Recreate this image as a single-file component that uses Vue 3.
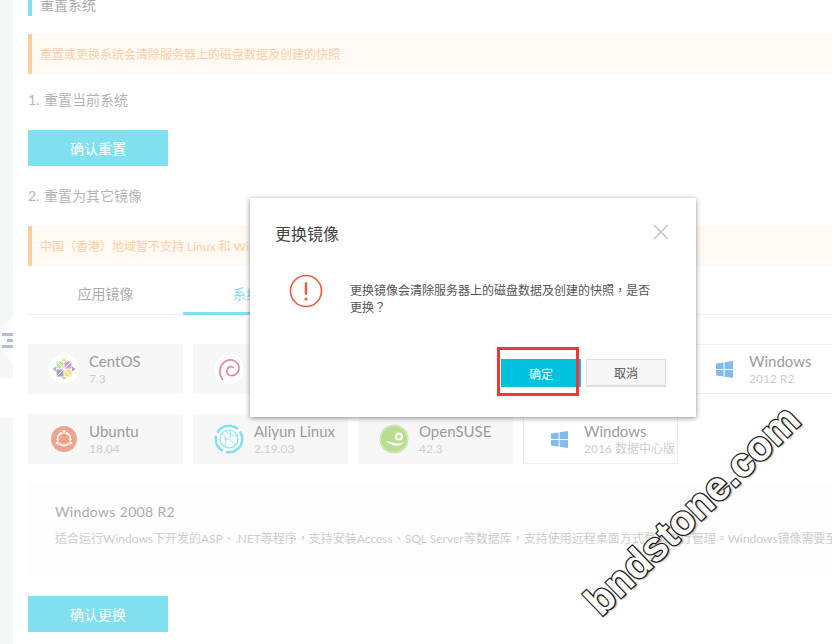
<template>
  <div class="page">
    <aside class="side">
      <div class="side-top">
        <div class="handle"></div>
        <div class="handle-bars"><i></i><i class="short"></i><i></i></div>
      </div>
      <div class="side-bottom"></div>
    </aside>

    <main class="main">
      <h3 class="title">重置系统</h3>
      <div class="alert first">重置或更换系统会清除服务器上的磁盘数据及创建的快照</div>
      <p class="step">1. 重置当前系统</p>
      <button class="primary">确认重置</button>
      <p class="step second">2. 重置为其它镜像</p>
      <div class="alert">中国（香港）地域暂不支持 Linux 和 Windows 系统互换</div>

      <div class="tabs">
        <div v-for="tab in tabs" :key="tab.label" class="tab" :class="{ active: tab.active }">{{ tab.label }}</div>
      </div>

      <div class="os-grid">
        <div v-for="os in systems" :key="os.name + os.version" class="os-card" :class="{ plain: os.icon === 'windows' }">
          <div class="os-icon">
            <svg v-if="os.icon === 'centos'" viewBox="0 0 30 30" width="30" height="30">
              <rect x="7.5" y="7.5" width="7" height="7" fill="#8cc63f" />
              <rect x="15.5" y="7.5" width="7" height="7" fill="#9c4f9f" />
              <rect x="7.5" y="15.5" width="7" height="7" fill="#4a3f9f" />
              <rect x="15.5" y="15.5" width="7" height="7" fill="#f5b81f" />
              <path d="M7.5 7.5L14.5 14.5M22.5 7.5L15.5 14.5M7.5 22.5L14.5 15.5M22.5 22.5L15.5 15.5" stroke="#fff" stroke-width="0.8" />
              <polygon points="15,3.5 17.5,7 12.5,7" fill="#f5b81f" />
              <polygon points="26.5,15 23,17.5 23,12.5" fill="#4a3f9f" />
              <polygon points="15,26.5 12.5,23 17.5,23" fill="#8cc63f" />
              <polygon points="3.5,15 7,12.5 7,17.5" fill="#9c4f9f" />
            </svg>
            <svg v-else-if="os.icon === 'debian'" viewBox="0 0 30 30" width="30" height="30">
              <path d="M9 26C4 20 5 11 12 7C18 4 25 8 25 14C25 20 19 23 15 21C12 19 12 15 15 13C17 12 19 13 20 14" fill="none" stroke="#d70751" stroke-width="1.7" />
            </svg>
            <svg v-else-if="os.icon === 'ubuntu'" viewBox="0 0 30 30" width="30" height="30">
              <circle cx="15" cy="15" r="13" fill="#dd4814" />
              <circle cx="15" cy="15" r="6.5" fill="none" stroke="#fff" stroke-width="2" />
              <circle cx="15" cy="7.2" r="2" fill="#fff" stroke="#dd4814" />
              <circle cx="8.2" cy="19" r="2" fill="#fff" stroke="#dd4814" />
              <circle cx="21.8" cy="19" r="2" fill="#fff" stroke="#dd4814" />
            </svg>
            <svg v-else-if="os.icon === 'aliyun'" viewBox="0 0 30 30" width="30" height="30">
              <circle cx="15" cy="15" r="13.3" fill="none" stroke="#00c1de" stroke-width="2.6" stroke-dasharray="24 3 18 3 24 3 8 1" />
              <circle cx="15" cy="15" r="9" fill="none" stroke="#00c1de" stroke-width="1.2" />
              <path d="M8 10C12 12 13 16 11 22M12 7C15 11 20 12 24 12M10 15C15 14 19 17 21 22M16 14C17 11 17 9 16 6" fill="none" stroke="#00c1de" stroke-width="0.9" />
            </svg>
            <svg v-else-if="os.icon === 'suse'" viewBox="0 0 30 30" width="30" height="30">
              <circle cx="15" cy="15" r="14.5" fill="#73ba25" />
              <circle cx="15" cy="15" r="13.5" fill="none" stroke="#fff" stroke-opacity="0.5" />
              <path d="M7 17C12 17 18 22 25 18C22 23 13 23 7 17Z" fill="#fff" />
              <circle cx="20" cy="12.5" r="4" fill="#fff" />
              <circle cx="20" cy="12.5" r="2" fill="#73ba25" />
            </svg>
            <svg v-else viewBox="0 0 17 17" width="17" height="17">
              <polygon points="0,2.5 7.6,1.4 7.6,8 0,8" fill="#0078e0" />
              <polygon points="8.6,1.3 17,0 17,8 8.6,8" fill="#0078e0" />
              <polygon points="0,9 7.6,9 7.6,15.6 0,14.5" fill="#0078e0" />
              <polygon points="8.6,9 17,9 17,17 8.6,15.7" fill="#0078e0" />
            </svg>
          </div>
          <div class="os-text">
            <div class="os-name">{{ os.name }}</div>
            <div class="os-version">{{ os.version }}</div>
          </div>
        </div>
      </div>

      <section class="desc">
        <h4>Windows 2008 R2</h4>
        <p>适合运行Windows下开发的ASP、.NET等程序，支持安装Access、SQL Server等数据库，支持使用远程桌面方式登录进行管理。Windows镜像需要至少1G内存</p>
      </section>
      <button class="primary">确认更换</button>
    </main>

    <div class="mask"></div>

    <div class="dialog">
      <header class="dialog-head">
        <span>更换镜像</span>
        <svg class="close" viewBox="0 0 16 16" width="16" height="16">
          <path d="M1 1L15 15M15 1L1 15" stroke="#c4c4c4" stroke-width="1.5" fill="none" />
        </svg>
      </header>
      <div class="dialog-body">
        <svg class="warn" viewBox="0 0 34 34" width="34" height="34">
          <circle cx="17" cy="17" r="15.5" fill="none" stroke="#f0583a" stroke-width="1.6" />
          <rect x="15.8" y="8" width="2.4" height="13" rx="1" fill="#f0583a" />
          <circle cx="17" cy="25" r="1.6" fill="#f0583a" />
        </svg>
        <p>更换镜像会清除服务器上的磁盘数据及创建的快照，是否更换？</p>
      </div>
      <footer class="dialog-foot">
        <button class="ok">确定</button>
        <button class="cancel">取消</button>
      </footer>
    </div>

    <div class="highlight"></div>
    <div class="watermark">bndstone.com</div>
  </div>
</template>

<script setup>
const tabs = [
  { label: '应用镜像', active: false },
  { label: '系统镜像', active: true },
]

const systems = [
  { icon: 'centos', name: 'CentOS', version: '7.3' },
  { icon: 'debian', name: 'Debian', version: '8.9' },
  { icon: 'windows', name: 'Windows', version: '2008 R2' },
  { icon: 'windows', name: 'Windows', version: '2012 R2' },
  { icon: 'windows', name: 'Windows', version: '2012 R2' },
  { icon: 'ubuntu', name: 'Ubuntu', version: '18.04' },
  { icon: 'aliyun', name: 'Aliyun Linux', version: '2.19.03' },
  { icon: 'suse', name: 'OpenSUSE', version: '42.3' },
  { icon: 'windows', name: 'Windows', version: '2016 数据中心版' },
]
</script>

<style>
html,
body {
  margin: 0;
  background: #fff;
}
</style>

<style scoped>
.page {
  position: relative;
  display: flex;
  width: 832px;
  height: 644px;
  overflow: hidden;
  font-family: Lato, 'Noto Sans CJK TC', sans-serif;
  color: #333;
}

.side {
  flex: 0 0 13px;
  display: flex;
  flex-direction: column;
  gap: 40px;
}

.side-top {
  position: relative;
  height: 378px;
  background: #e9ecf1;
}

.side-bottom {
  flex: 1;
  background: #e9ecf1;
}

.handle {
  position: absolute;
  left: 0;
  top: 316px;
  width: 13px;
  height: 49px;
  background: #f6f6f7;
  clip-path: polygon(100% 0, 100% 100%, 0 68%, 0 24%);
}

.handle-bars {
  position: absolute;
  left: 2px;
  top: 333px;
  width: 11px;
  display: flex;
  flex-direction: column;
  gap: 3px;
}

.handle-bars i {
  display: block;
  height: 3px;
  background: #6d7f9a;
}

.handle-bars i.short {
  margin-left: 5px;
}

.main {
  flex: 1;
  min-width: 0;
  padding-left: 15px;
  overflow: hidden;
}

.title {
  margin: -7px 0 18px;
  height: 23px;
  line-height: 24px;
  padding-left: 8px;
  border-left: 4px solid #00c1de;
  font-size: 14px;
  font-weight: 400;
  color: #555;
}

.alert {
  height: 40px;
  line-height: 42px;
  padding-left: 8px;
  border-left: 4px solid #f89c3c;
  background: #fff3e9;
  font-size: 12px;
  color: #f89c4c;
  white-space: nowrap;
}

.step {
  margin: 16px 0 20px;
  height: 20px;
  line-height: 20px;
  font-size: 14px;
  word-spacing: 1px;
  color: #666;
}

.step.second {
  margin: 20px 0 20px;
}

.primary {
  display: block;
  width: 140px;
  height: 36px;
  padding: 0;
  border: 0;
  background: #00c1de;
  color: #fff;
  font: inherit;
  font-size: 14px;
}

.tabs {
  display: flex;
  height: 48px;
  border-bottom: 1px solid #e6e6e6;
  margin-bottom: 29px;
}

.tab {
  width: 155px;
  height: 48px;
  line-height: 56px;
  text-align: center;
  font-size: 14px;
  color: #555;
}

.tab.active {
  color: #00c1de;
  border-bottom: 3px solid #00c1de;
  box-sizing: border-box;
  margin-top: 1px;
  line-height: 54px;
}

.os-grid {
  display: grid;
  grid-template-columns: repeat(5, 155px);
  grid-auto-rows: 50px;
  column-gap: 10px;
  row-gap: 20px;
}

.os-card {
  display: flex;
  align-items: center;
  gap: 10px;
  box-sizing: border-box;
  padding-left: 21px;
  background: #eee;
}

.os-card.plain {
  background: #fff;
  border: 1px solid #ddd;
  padding-left: 20px;
}

.os-icon {
  flex: 0 0 30px;
  height: 30px;
  display: flex;
  align-items: center;
  justify-content: center;
  border-radius: 50%;
  background: #fff;
}

.os-name {
  font-size: 15px;
  line-height: 18px;
  margin-bottom: 1px;
  color: #333;
  white-space: nowrap;
}

.os-version {
  font-size: 12px;
  line-height: 15px;
  color: #999;
  white-space: nowrap;
}

.desc {
  height: 92px;
  box-sizing: border-box;
  margin: 20px 0;
  padding: 18px 27px 0;
  background: #fafafa;
  white-space: nowrap;
}

.desc h4 {
  margin: 0 0 7px;
  font-size: 14px;
  line-height: 20px;
  font-weight: 400;
  letter-spacing: 0.35px;
  color: #555;
}

.desc p {
  margin: 0;
  font-size: 12px;
  line-height: 20px;
  color: #999;
}

.mask {
  position: absolute;
  inset: 0;
  background: rgba(255, 255, 255, 0.5);
}

.dialog {
  position: absolute;
  left: 250px;
  top: 198px;
  width: 446px;
  height: 219px;
  box-sizing: border-box;
  padding: 0 30px 0 25px;
  background: #fff;
  box-shadow: 0 1px 5px rgba(0, 0, 0, 0.45);
}

.dialog-head {
  display: flex;
  align-items: center;
  justify-content: space-between;
  height: 72px;
  font-size: 16px;
  color: #444;
}

.dialog-head span {
  margin-top: -2px;
}

.close {
  margin: -4px -3px 0 0;
}

.dialog-body {
  display: flex;
  align-items: flex-start;
  gap: 27px;
  height: 89px;
  padding-left: 14px;
}

.warn {
  flex: none;
  margin-top: 4px;
}

.dialog-body p {
  margin: 12px 0 0;
  width: 310px;
  font-size: 12px;
  line-height: 17px;
  color: #555;
}

.dialog-foot {
  display: flex;
  justify-content: flex-end;
  gap: 5px;
}

.dialog-foot button {
  width: 80px;
  height: 28px;
  padding: 0;
  box-sizing: border-box;
  font: inherit;
  font-size: 12px;
}

.ok {
  border: 0;
  background: #00c1de;
  color: #fff;
}

.cancel {
  border: 1px solid #ddd;
  border-bottom-width: 2px;
  background: #f7f7f7;
  color: #555;
}

.highlight {
  position: absolute;
  left: 497px;
  top: 347px;
  width: 76px;
  height: 43px;
  border: 3px solid #f33535;
}

.watermark {
  position: absolute;
  left: 552px;
  top: 486px;
  font-family: 'Liberation Sans', sans-serif;
  font-size: 41px;
  font-weight: 700;
  line-height: 48px;
  white-space: nowrap;
  color: #fff;
  -webkit-text-stroke: 2.5px #222;
  paint-order: stroke fill;
  text-shadow: 1px 2px 2px rgba(0, 0, 0, 0.5);
  transform: rotate(-44deg);
}
</style>
